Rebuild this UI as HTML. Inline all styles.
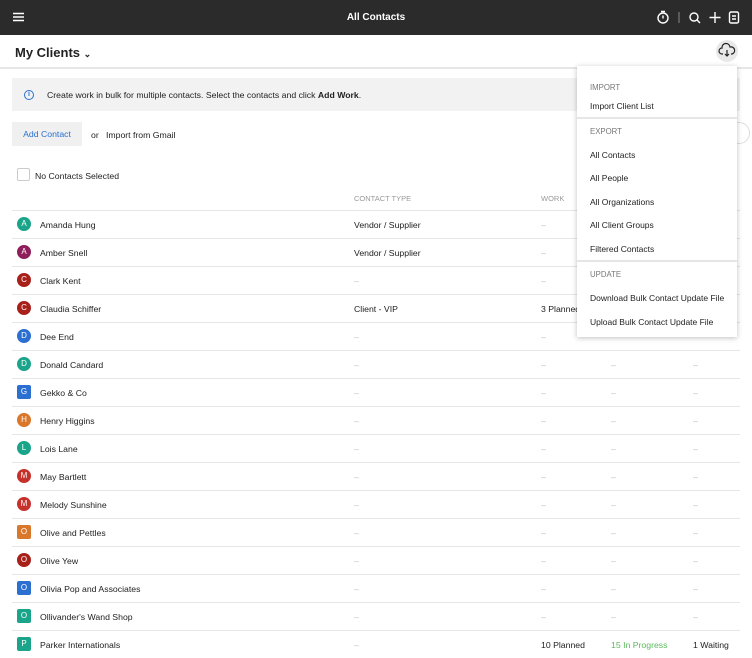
<!DOCTYPE html>
<html><head><meta charset="utf-8"><style>
*{box-sizing:border-box;margin:0;padding:0}
body{width:752px;height:650px;overflow:hidden;background:#fff;font-family:"Liberation Sans",sans-serif;color:#222;font-size:8.7px;position:relative}
.top{position:absolute;left:0;top:0;width:752px;height:35px;background:#2b2b2b;color:#fff}
.top .t{position:absolute;left:0;right:0;top:12px;text-align:center;font-size:10px;font-weight:bold}
.hdr{position:absolute;top:35px;left:0;width:752px;height:34px;border-bottom:2px solid #e6e6e6}
.hdr .h{position:absolute;left:15px;top:10px;font-size:13px;font-weight:bold;color:#222}
.cloud{position:absolute;left:716px;top:5px;width:22px;height:22px;border-radius:50%;background:#e8e8e8}
.info{position:absolute;left:12px;top:78px;width:728px;height:33px;background:#f2f2f2}
.info span{position:absolute;left:35px;top:12px}
.ic{position:absolute;left:24px;top:90px;width:10px;height:10px;border:1.2px solid #2b6fd1;border-radius:50%;color:#2b6fd1;font-size:7px;text-align:center;line-height:8px;font-weight:bold}
.btn{position:absolute;left:12px;top:122px;width:70px;height:24px;background:#f0f0f0;color:#2b6fd1;font-size:8.7px;line-height:24px;text-align:center}
.cb{position:absolute;left:17px;top:168px;width:13px;height:13px;border:1px solid #ccc;border-radius:2px}
.row{position:absolute;left:12px;width:728px;height:28px;border-top:1px solid #e6e6e6}
.row div{position:absolute;top:9px}
.av{position:absolute;left:5px;top:6px!important;width:14px;height:14px;border-radius:50%;color:#fff;font-size:8px;text-align:center;line-height:14px}
.sq{border-radius:2px}
.d{color:#bbb}
.menu{position:absolute;left:577px;top:66px;width:160px;height:271px;background:#fff;box-shadow:0 1px 5px rgba(0,0,0,.25)}
.menu div{position:absolute;left:13px;font-size:8.5px}
.menu .s{color:#777;font-size:7.8px}
.menu hr{position:absolute;left:0;width:160px;border:0;border-top:2px solid #e6e6e6}
</style></head><body>
<div class="top">
<svg style="position:absolute;left:13px;top:12px" width="11" height="10"><path d="M0 1.5H11M0 5H11M0 8.5H11" stroke="#fff" stroke-width="1.5"/></svg>
<div class="t">All Contacts</div>
<svg style="position:absolute;left:656px;top:10px" width="90" height="15" fill="none" stroke="#fff" stroke-width="1.4">
<circle cx="7" cy="8" r="5"/><path d="M5 1.5H9M7 5.5V8.5"/>
<path d="M23 2V13" stroke="#888" stroke-width="1"/>
<circle cx="38" cy="7" r="4"/><path d="M41 10L44 13"/>
<path d="M59 2V13M53.5 7.5H64.5"/>
<rect x="73.5" y="2" width="9" height="11" rx="1.5"/><path d="M76 6H80M76 9H80"/>
</svg>
</div>
<div class="hdr"><div class="h">My Clients <span style="font-size:9px">⌄</span></div>
<div class="cloud"><svg width="22" height="22" fill="none" stroke="#222" stroke-width="1.2"><path d="M7 14H6a3 3 0 0 1 0-6a4 4 0 0 1 8-1a3 3 0 0 1 2 7h-1"/><path d="M11 10V16M9 14L11 16L13 14"/></svg></div></div>
<div class="info"><span>Create work in bulk for multiple contacts. Select the contacts and click <b>Add Work</b>.</span></div>
<div class="ic">i</div>
<div class="btn">Add Contact</div>
<div style="position:absolute;left:91px;top:130px">or &nbsp;&nbsp;Import from Gmail</div>
<div style="position:absolute;left:728px;top:122px;width:22px;height:22px;border:1px solid #ddd;border-radius:50%"></div>
<div class="cb"></div>
<div style="position:absolute;left:35px;top:171px">No Contacts Selected</div>
<div style="position:absolute;left:354px;top:194px;color:#999;font-size:7.5px">CONTACT TYPE</div>
<div style="position:absolute;left:541px;top:194px;color:#999;font-size:7.5px">WORK</div>
<div class="row" style="top:210px"><span class="av" style="background:#1aa58a">A</span><div style="left:28px">Amanda Hung</div><div style="left:342px">Vendor / Supplier</div><div class="d" style="left:529px">–</div></div>
<div class="row" style="top:238px"><span class="av" style="background:#8e1f5a">A</span><div style="left:28px">Amber Snell</div><div style="left:342px">Vendor / Supplier</div><div class="d" style="left:529px">–</div></div>
<div class="row" style="top:266px"><span class="av" style="background:#a8201a">C</span><div style="left:28px">Clark Kent</div><div class="d" style="left:342px">–</div><div class="d" style="left:529px">–</div></div>
<div class="row" style="top:294px"><span class="av" style="background:#a8201a">C</span><div style="left:28px">Claudia Schiffer</div><div style="left:342px">Client - VIP</div><div style="left:529px">3 Planned</div></div>
<div class="row" style="top:322px"><span class="av" style="background:#2b6fd1">D</span><div style="left:28px">Dee End</div><div class="d" style="left:342px">–</div><div class="d" style="left:529px">–</div></div>
<div class="row" style="top:350px"><span class="av" style="background:#1aa58a">D</span><div style="left:28px">Donald Candard</div><div class="d" style="left:342px">–</div><div class="d" style="left:529px">–</div><div class="d" style="left:599px">–</div><div class="d" style="left:681px">–</div></div>
<div class="row" style="top:378px"><span class="av sq" style="background:#2b6fd1">G</span><div style="left:28px">Gekko &amp; Co</div><div class="d" style="left:342px">–</div><div class="d" style="left:529px">–</div><div class="d" style="left:599px">–</div><div class="d" style="left:681px">–</div></div>
<div class="row" style="top:406px"><span class="av" style="background:#d9772b">H</span><div style="left:28px">Henry Higgins</div><div class="d" style="left:342px">–</div><div class="d" style="left:529px">–</div><div class="d" style="left:599px">–</div><div class="d" style="left:681px">–</div></div>
<div class="row" style="top:434px"><span class="av" style="background:#1aa58a">L</span><div style="left:28px">Lois Lane</div><div class="d" style="left:342px">–</div><div class="d" style="left:529px">–</div><div class="d" style="left:599px">–</div><div class="d" style="left:681px">–</div></div>
<div class="row" style="top:462px"><span class="av" style="background:#c6312b">M</span><div style="left:28px">May Bartlett</div><div class="d" style="left:342px">–</div><div class="d" style="left:529px">–</div><div class="d" style="left:599px">–</div><div class="d" style="left:681px">–</div></div>
<div class="row" style="top:490px"><span class="av" style="background:#c6312b">M</span><div style="left:28px">Melody Sunshine</div><div class="d" style="left:342px">–</div><div class="d" style="left:529px">–</div><div class="d" style="left:599px">–</div><div class="d" style="left:681px">–</div></div>
<div class="row" style="top:518px"><span class="av sq" style="background:#d9772b">O</span><div style="left:28px">Olive and Pettles</div><div class="d" style="left:342px">–</div><div class="d" style="left:529px">–</div><div class="d" style="left:599px">–</div><div class="d" style="left:681px">–</div></div>
<div class="row" style="top:546px"><span class="av" style="background:#a8201a">O</span><div style="left:28px">Olive Yew</div><div class="d" style="left:342px">–</div><div class="d" style="left:529px">–</div><div class="d" style="left:599px">–</div><div class="d" style="left:681px">–</div></div>
<div class="row" style="top:574px"><span class="av sq" style="background:#2b6fd1">O</span><div style="left:28px">Olivia Pop and Associates</div><div class="d" style="left:342px">–</div><div class="d" style="left:529px">–</div><div class="d" style="left:599px">–</div><div class="d" style="left:681px">–</div></div>
<div class="row" style="top:602px"><span class="av sq" style="background:#1aa58a">O</span><div style="left:28px">Ollivander's Wand Shop</div><div class="d" style="left:342px">–</div><div class="d" style="left:529px">–</div><div class="d" style="left:599px">–</div><div class="d" style="left:681px">–</div></div>
<div class="row" style="top:630px"><span class="av sq" style="background:#1aa58a">P</span><div style="left:28px">Parker Internationals</div><div class="d" style="left:342px">–</div><div style="left:529px">10 Planned</div><div style="left:599px;color:#5cb85c">15 In Progress</div><div style="left:681px">1 Waiting</div></div>
<div class="menu">
<div class="s" style="top:17px">IMPORT</div>
<div style="top:35px">Import Client List</div>
<hr style="top:51px">
<div class="s" style="top:61px">EXPORT</div>
<div style="top:84px">All Contacts</div>
<div style="top:107px">All People</div>
<div style="top:131px">All Organizations</div>
<div style="top:154px">All Client Groups</div>
<div style="top:178px">Filtered Contacts</div>
<hr style="top:194px">
<div class="s" style="top:204px">UPDATE</div>
<div style="top:227px">Download Bulk Contact Update File</div>
<div style="top:251px">Upload Bulk Contact Update File</div>
</div>
</body></html>
